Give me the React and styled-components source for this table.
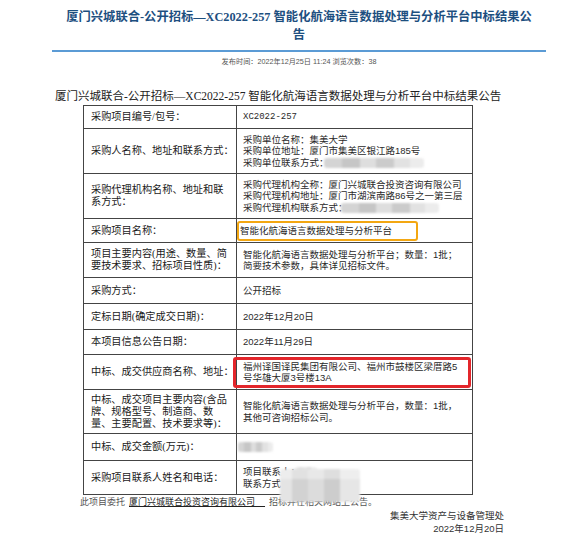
import React from "react";
import styled, { createGlobalStyle } from "styled-components";

const SERIF = `"Liberation Serif", "Noto Sans CJK SC", serif`;
const SANS = `"Liberation Sans", "Noto Sans CJK SC", sans-serif`;

const GlobalStyle = createGlobalStyle`
  html, body {
    margin: 0;
    padding: 0;
    background: #fff;
  }
  body {
    width: 585px;
    height: 537px;
    overflow: hidden;
    font-family: ${SANS};
    color: #222;
  }
`;

const Page = styled.div`
  padding-top: 8px;
`;

const Header = styled.header`
  width: 494px;
  margin-left: 52px;
  display: flex;
  flex-direction: column;
  align-items: center;
`;

const Title = styled.h1`
  margin: 0;
  width: 472px;
  text-align: center;
  font-family: ${SERIF};
  font-size: 12.3px;
  line-height: 18px;
  font-weight: bold;
  color: #1d4f7f;
`;

const Rule = styled.div`
  align-self: stretch;
  height: 2px;
  margin-top: 6px;
  background: #5b9bd5;
`;

const Meta = styled.div`
  margin-top: 5px;
  font-size: 7.2px;
  line-height: 10px;
  color: #555;
`;

const Article = styled.article`
  width: 494px;
  margin-left: 52px;
`;

const Heading = styled.h2`
  margin: 21px 0 1px 3px;
  font-family: ${SERIF};
  font-size: 11.5px;
  line-height: 16px;
  font-weight: normal;
  color: #222;
  white-space: nowrap;
`;

const Table = styled.div`
  width: 390px;
  margin-left: 31px;
  box-sizing: border-box;
  border: 1px solid #444;
  border-bottom: none;
`;

const Row = styled.div`
  display: grid;
  grid-template-columns: 153px 1fr;
  height: ${(p) => p.$h}px;
  box-sizing: border-box;
  border-bottom: 1px solid #444;
`;

const Label = styled.div`
  display: flex;
  flex-direction: column;
  justify-content: center;
  box-sizing: border-box;
  padding: 0 4px 0 7px;
  border-right: 1px solid #444;
  font-family: ${SERIF};
  font-size: 10.2px;
  line-height: 12px;
  color: #1a1a1a;
`;

const Value = styled.div`
  position: relative;
  display: flex;
  flex-direction: column;
  justify-content: center;
  padding-left: 6px;
  font-size: 9.5px;
  line-height: 11.5px;
  color: #2a2a2a;
`;

const Line = styled.div`
  white-space: nowrap;
`;

const Code = styled.span`
  font-family: "Liberation Mono", monospace;
  font-size: 9px;
`;

const Mark = styled.div`
  box-sizing: border-box;
  width: ${(p) => p.$w}px;
  height: ${(p) => p.$h}px;
  margin-left: ${(p) => p.$ml}px;
  padding: 0 ${(p) => p.$pr}px 0 ${(p) => p.$pl}px;
  border: ${(p) => p.$bw}px solid ${(p) => p.$color};
  border-radius: 3px;
  display: flex;
  align-items: center;
`;

const Redact = styled.span`
  display: inline-block;
  width: ${(p) => p.$w}px;
  height: ${(p) => p.$h || 10}px;
  margin-left: ${(p) => p.$ml || 0}px;
  vertical-align: -2px;
  border-radius: 3px;
  background-image: linear-gradient(
    90deg,
    #d4d4d4 0 18%,
    #c6c6c6 18% 36%,
    #dedede 36% 52%,
    #cbcbcb 52% 70%,
    #e2e2e2 70% 86%,
    #ececec 86%
  );
  filter: blur(1.2px);
`;

const RedactBlob = styled(Redact)`
  position: absolute;
  left: ${(p) => p.$x}px;
  top: ${(p) => p.$y}px;
  margin: 0;
  z-index: 2;
  background-image: linear-gradient(
      180deg,
      rgba(255, 255, 255, 0.35) 0 30%,
      rgba(255, 255, 255, 0) 30%
    ),
    linear-gradient(
      90deg,
      #e4e4e4 0 15%,
      #d2d2d2 15% 35%,
      #dcdcdc 35% 55%,
      #cdcdcd 55% 75%,
      #e6e6e6 75%
    );
`;

const WrapText = styled.div`
  line-height: 11px;
`;

const Note = styled.p`
  margin: 1px 0 0 28px;
  font-size: 9px;
  line-height: 12px;
  color: #555;
  white-space: nowrap;
`;

const Link = styled.span`
  color: #222;
  text-decoration: underline;
  margin: 0 4px;
`;

const Signature = styled.div`
  margin-top: 1px;
  padding-right: 42px;
  text-align: right;
  font-size: 9.5px;
  line-height: 13px;
  color: #333;
`;

const rows = [
  { h: 23, label: ["采购项目编号/包号："], value: [<Code key="c">XC2022-257</Code>] },
  {
    h: 45,
    label: ["采购人名称、地址和联系方式："],
    value: [
      "采购单位名称：集美大学",
      "采购单位地址：厦门市集美区银江路185号",
      <>
        采购单位联系方式：<Redact $w={100} $ml={-5} />
      </>,
    ],
  },
  {
    h: 45,
    label: ["采购代理机构名称、地址和联", "系方式："],
    value: [
      "采购代理机构全称：厦门兴城联合投资咨询有限公司",
      "采购代理机构地址：厦门市湖滨南路86号之一第三层",
      <>
        采购代理机构联系方式：<Redact $w={98} $ml={-7} />
      </>,
    ],
  },
  {
    h: 24,
    label: ["采购项目名称："],
    mark: { w: 181, h: 20, ml: -6, pl: 1, pr: 0, bw: 2, color: "#f3a712" },
    value: ["智能化航海语言数据处理与分析平台"],
  },
  {
    h: 35,
    label: ["项目主要内容(用途、数量、简", "要技术要求、招标项目性质)："],
    value: ["智能化航海语言数据处理与分析平台；数量：1批；", "简要技术参数，具体详见招标文件。"],
  },
  { h: 26, label: ["采购方式："], value: ["公开招标"] },
  { h: 26, label: ["定标日期(确定成交日期)："], value: ["2022年12月20日"] },
  { h: 25, label: ["本项目信息公告日期："], value: ["2022年11月29日"] },
  {
    h: 35,
    label: ["中标、成交供应商名称、地址："],
    mark: { w: 238, h: 31, ml: -10, pl: 7, pr: 7, bw: 3, color: "#e3262b" },
    wrap: "福州译国译民集团有限公司、福州市鼓楼区梁厝路5号华雄大厦3号楼13A",
  },
  {
    h: 44,
    label: ["中标、成交项目主要内容(含品", "牌、规格型号、制造商、数", "量、主要配置、技术要求等)："],
    value: ["智能化航海语言数据处理与分析平台，数量：1批，", "其他可咨询招标公司。"],
  },
  { h: 27, label: ["中标、成交金额(万元)："], value: [<Redact key="r" $w={35} $ml={-5} />] },
  {
    h: 34,
    label: ["采购项目联系人姓名和电话："],
    value: ["项目联系人：", "联系方式"],
    blobs: [
      { x: 58, y: 6, w: 22, h: 12 },
      { x: 43, y: 8, w: 80, h: 33 },
    ],
  },
];

const InfoRow = ({ row }) => {
  const body = row.wrap ? (
    <WrapText>{row.wrap}</WrapText>
  ) : (
    row.value.map((v, i) => <Line key={i}>{v}</Line>)
  );
  return (
    <Row $h={row.h}>
      <Label>
        {row.label.map((l, i) => (
          <Line key={i}>{l}</Line>
        ))}
      </Label>
      <Value>
        {row.mark ? (
          <Mark
            $w={row.mark.w}
            $h={row.mark.h}
            $ml={row.mark.ml}
            $pl={row.mark.pl}
            $pr={row.mark.pr}
            $bw={row.mark.bw}
            $color={row.mark.color}
          >
            {body}
          </Mark>
        ) : (
          body
        )}
        {row.blobs &&
          row.blobs.map((b, i) => (
            <RedactBlob key={i} $x={b.x} $y={b.y} $w={b.w} $h={b.h} />
          ))}
      </Value>
    </Row>
  );
};

export default function App() {
  return (
    <>
      <GlobalStyle />
      <Page>
        <Header>
          <Title>
            厦门兴城联合-公开招标—XC2022-257 智能化航海语言数据处理与分析平台中标结果公告
          </Title>
          <Rule />
          <Meta>发布时间：2022年12月25日 11:24 浏览次数：38</Meta>
        </Header>
        <Article>
          <Heading>
            厦门兴城联合-公开招标—XC2022-257 智能化航海语言数据处理与分析平台中标结果公告
          </Heading>
          <Table>
            {rows.map((r, i) => (
              <InfoRow key={i} row={r} />
            ))}
          </Table>
          <Note>
            此项目委托<Link>厦门兴城联合投资咨询有限公司&nbsp;&nbsp;&nbsp;&nbsp;</Link>招标并在相关网站上公告。
          </Note>
          <Signature>
            <div>集美大学资产与设备管理处</div>
            <div>2022年12月20日</div>
          </Signature>
        </Article>
      </Page>
    </>
  );
}
